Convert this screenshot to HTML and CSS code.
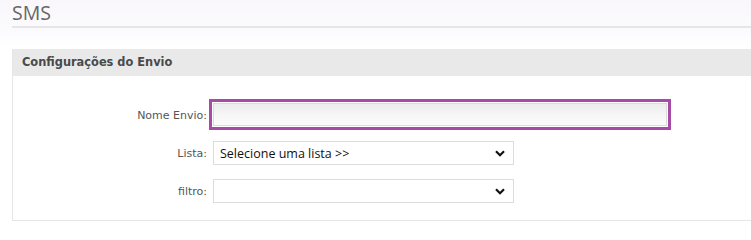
FILE: index.html
```html
<!DOCTYPE html>
<html lang="pt">
<head>
<meta charset="utf-8">
<title>SMS</title>
<link rel="stylesheet" href="styles.css">
</head>
<body>
<div class="page">
  <h1 class="title">SMS</h1>
  <section class="panel">
    <div class="panel-head">Configurações do Envio</div>
    <div class="panel-body">
      <label class="lbl" for="nome">Nome Envio:</label>
      <div class="field"><input id="nome" class="text-input" type="text"></div>
      <label class="lbl" for="lista">Lista:</label>
      <div class="field">
        <div class="select-wrap">
          <select id="lista" class="sel"><option>Selecione uma lista &gt;&gt;</option></select>
          <svg class="chev" width="10" height="7" viewBox="0 0 10 7"><path d="M1 1.2 L5 5.2 L9 1.2" fill="none" stroke="#111" stroke-width="2.2"/></svg>
        </div>
      </div>
      <label class="lbl" for="filtro">filtro:</label>
      <div class="field">
        <div class="select-wrap">
          <select id="filtro" class="sel"><option></option></select>
          <svg class="chev" width="10" height="7" viewBox="0 0 10 7"><path d="M1 1.2 L5 5.2 L9 1.2" fill="none" stroke="#111" stroke-width="2.2"/></svg>
        </div>
      </div>
    </div>
  </section>
</div>
</body>
</html>
```
FILE: styles.css
```css
html, body {
  margin: 0;
  padding: 0;
  background: #fff;
  overflow: hidden;
}
body {
  width: 751px;
  height: 222px;
  background: linear-gradient(180deg, #f9f7fc 0px, #fbfafd 30px, #ffffff 48px);
  font-family: "DejaVu Sans", Verdana, sans-serif;
}
.page {
  padding-left: 12px;
}
.title {
  margin: 0;
  height: 26px;
  border-bottom: 2px solid #e6e6e6;
  font-family: "Open Sans", "Noto Sans", sans-serif;
  font-weight: 400;
  font-size: 19.5px;
  line-height: 26px;
  color: #666;
}
.panel {
  margin-top: 21px;
  width: 760px;
  border: 1px solid #e6e6e6;
  border-top: 0;
  box-sizing: border-box;
}
.panel-head {
  height: 27px;
  line-height: 27px;
  background: #e9e9e9;
  padding-left: 9px;
  font-size: 11.4px;
  font-weight: bold;
  color: #4a4a4a;
}
.panel-body {
  display: grid;
  grid-template-columns: 194px 1fr;
  column-gap: 6px;
  row-gap: 14px;
  align-items: center;
  padding: 27px 0 17px 0;
}
.lbl {
  text-align: right;
  font-size: 11px;
  color: #555;
}
.field {
  display: flex;
  align-items: center;
}
.text-input {
  width: 454px;
  height: 23px;
  box-sizing: border-box;
  border: 1px solid #dcdcdc;
  background: linear-gradient(180deg, #ececec 0%, #f6f6f6 50%, #fbfbfb 100%);
  outline: 3px solid #a64ca6;
  outline-offset: 1px;
  margin: 0 0 1px 0;
  padding: 0 4px;
}
.select-wrap {
  position: relative;
  width: 301px;
  height: 24px;
}
.sel {
  appearance: none;
  -webkit-appearance: none;
  width: 100%;
  height: 100%;
  box-sizing: border-box;
  border: 1px solid #dcdcdc;
  background: #fff;
  border-radius: 0;
  margin: 0;
  padding: 0 0 0 6px;
  font-family: "Open Sans", "Noto Sans", sans-serif;
  font-size: 12.5px;
  color: #111;
}
.chev {
  position: absolute;
  right: 9px;
  top: 9px;
  pointer-events: none;
}
```
